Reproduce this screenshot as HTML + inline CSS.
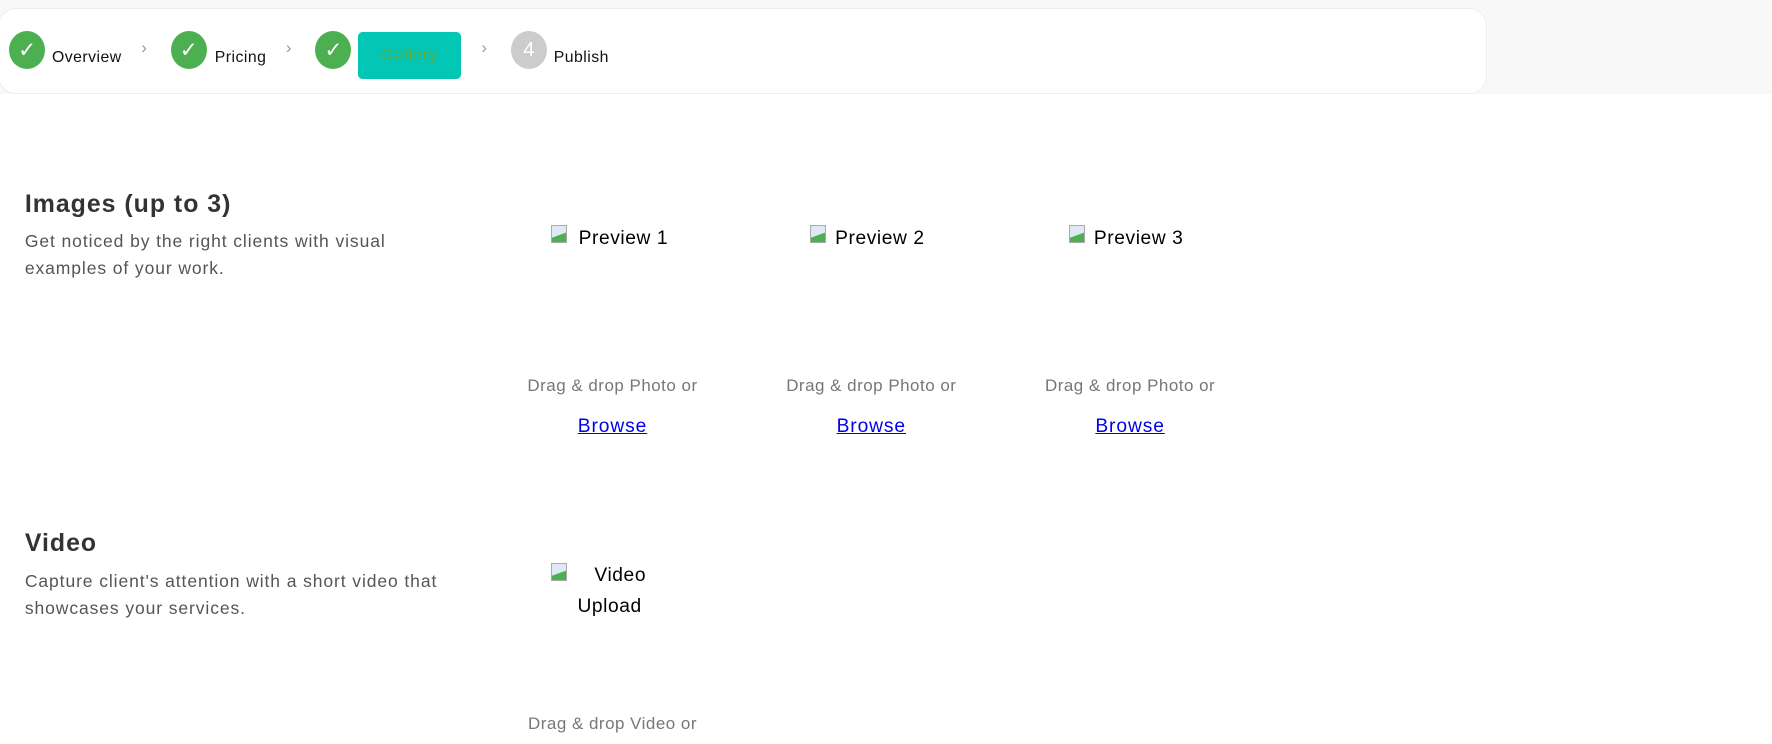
<!DOCTYPE html>
<html><head><style>
html,body{margin:0;padding:0}
body{width:1772px;height:744px;overflow:hidden;background:#fff;font-family:"Liberation Sans",sans-serif}
.w{position:relative;width:1568px;height:658px;zoom:1.1301;letter-spacing:0.05em}
.top{position:absolute;left:0;top:0;width:1568px;height:83px;background:#f8f8f8}
.card{position:absolute;left:-2px;top:7px;width:1316px;height:74px;background:#fff;border:1px solid #eee;border-radius:16px}
.a{position:absolute;white-space:nowrap}
.c{position:absolute;width:32px;height:34px;border-radius:50%;background:#4caf50;color:#fff;font-size:19px;text-align:center;line-height:34px;top:27px;letter-spacing:0}
.lbl{position:absolute;top:43px;font-size:14px;color:#111;letter-spacing:0.03em}
.ch{position:absolute;top:34px;color:#999;font-size:15px}
.h{position:absolute;left:22px;font-size:22px;font-weight:bold;color:#333;letter-spacing:0.04em}
.d{position:absolute;left:22px;font-size:15.5px;color:#555;line-height:23.5px;white-space:nowrap}
.ic{position:absolute;width:14px;height:16px;background:linear-gradient(160deg,#dfe8f5 55%,#4caf50 56%);border:1px solid #aaa;box-sizing:border-box}
.p{position:absolute;font-size:17px;color:#000;white-space:nowrap;letter-spacing:0.03em}
.dd{position:absolute;width:200px;text-align:center;font-size:15px;color:#777;letter-spacing:0.03em}
.br{position:absolute;width:200px;text-align:center;font-size:17px;color:#00e;text-decoration:underline}
</style></head><body><div class="w">
<div class="top"></div>
<div class="card"></div>
<div class="c" style="left:8px">✓</div><div class="lbl" style="left:46px">Overview</div>
<div class="ch" style="left:125px">›</div>
<div class="c" style="left:151px">✓</div><div class="lbl" style="left:190px">Pricing</div>
<div class="ch" style="left:253px">›</div>
<div class="c" style="left:279px">✓</div>
<div class="a" style="left:317px;top:28px;width:91px;height:42px;background:#03c6b5;border-radius:4px;color:#5aae3e;font-size:14px;text-align:center;line-height:42px">Gallery</div>
<div class="ch" style="left:426px">›</div>
<div class="c" style="left:452px;background:#ccc;font-size:18px">4</div><div class="lbl" style="left:490px">Publish</div>

<div class="h" style="top:168px">Images (up to 3)</div>
<div class="d" style="top:202px">Get noticed by the right clients with visual<br>examples of your work.</div>
<div class="ic" style="left:488px;top:199px"></div><div class="p" style="left:512px;top:202px">Preview 1</div>
<div class="ic" style="left:717px;top:199px"></div><div class="p" style="left:739px;top:202px">Preview 2</div>
<div class="ic" style="left:946px;top:199px"></div><div class="p" style="left:968px;top:202px">Preview 3</div>
<div class="dd" style="left:442px;top:333px">Drag &amp; drop Photo or</div>
<div class="dd" style="left:671px;top:333px">Drag &amp; drop Photo or</div>
<div class="dd" style="left:900px;top:333px">Drag &amp; drop Photo or</div>
<div class="br" style="left:442px;top:368px">Browse</div>
<div class="br" style="left:671px;top:368px">Browse</div>
<div class="br" style="left:900px;top:368px">Browse</div>

<div class="h" style="top:468px">Video</div>
<div class="d" style="top:503px">Capture client's attention with a short video that<br>showcases your services.</div>
<div class="ic" style="left:488px;top:498px"></div><div class="p" style="left:526px;top:500px">Video</div>
<div class="p" style="left:511px;top:527px">Upload</div>
<div class="dd" style="left:442px;top:632px">Drag &amp; drop Video or</div>
</div></body></html>
